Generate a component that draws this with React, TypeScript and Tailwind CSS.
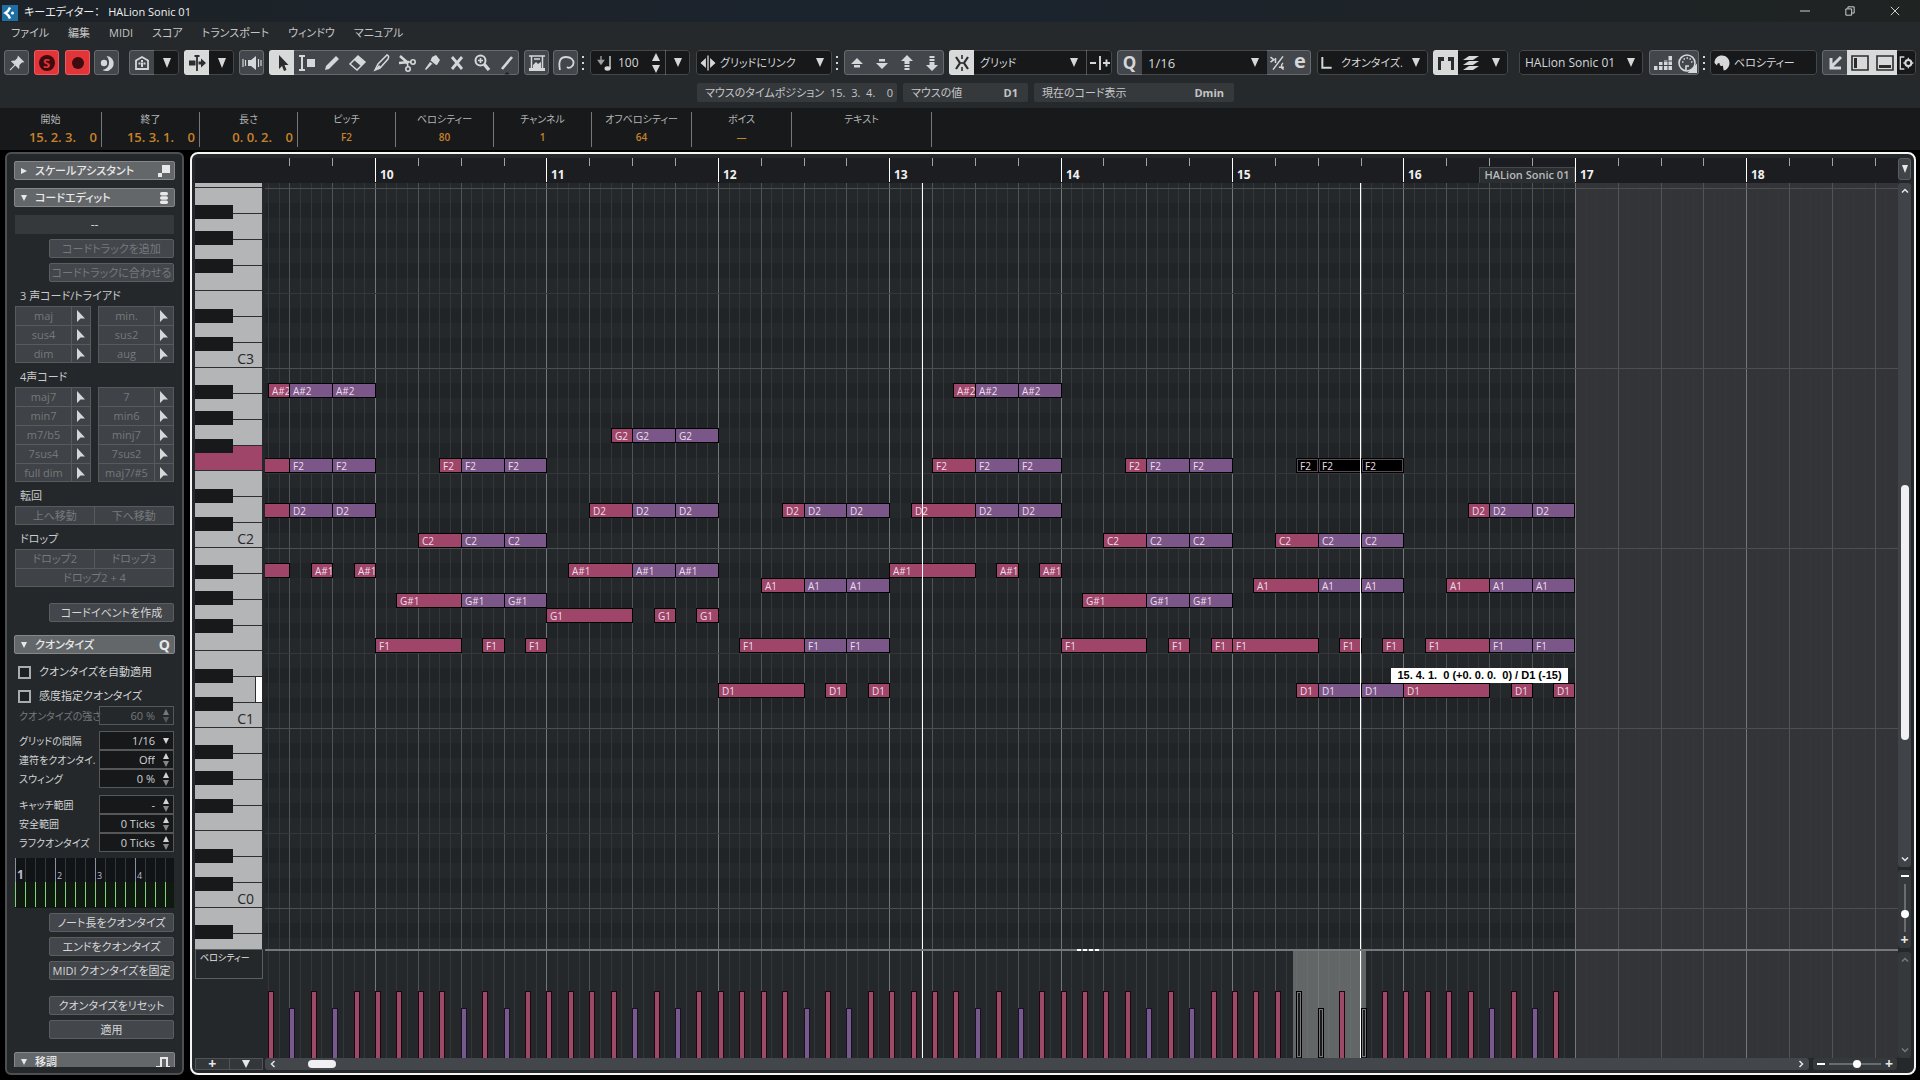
import type { ReactNode } from "react";

type Note = { pitch: string; start: number; len: number; tone: "pink" | "violet" | "held" };

const BAR_WIDTH = 171.4;
const FIRST_BAR_X = 110;
const ROW = 15;
const GRID_TOP_PITCH_Y = 5; // y of the C4 line inside the note grid

const SEMITONES: Record<string, number> = {
	"A#2": 34,
	G2: 31,
	F2: 29,
	D2: 26,
	C2: 24,
	"A#1": 22,
	A1: 21,
	"G#1": 20,
	G1: 19,
	F1: 17,
	D1: 14,
};

// start and length are counted in eighths from bar 10
const eighthX = (n: number) => Math.round(FIRST_BAR_X + (n * BAR_WIDTH) / 8);
const pitchY = (p: string) => GRID_TOP_PITCH_Y + (47 - SEMITONES[p]) * ROW;

// one bar of the arpeggio: the bass note, then three voices that come in one after another
const bar = (at: number, [bass, ...voices]: string[]) => {
	const notes: Note[] = [
		{ pitch: bass, start: at, len: 4, tone: "pink" },
		{ pitch: bass, start: at + 5, len: 1, tone: "pink" },
		{ pitch: bass, start: at + 7, len: 1, tone: "pink" },
	];
	voices.forEach((pitch, i) => {
		notes.push({ pitch, start: at + i + 1, len: 3 - i, tone: "pink" });
		notes.push({ pitch, start: at + 4, len: 2, tone: "violet" });
		notes.push({ pitch, start: at + 6, len: 2, tone: "violet" });
	});
	return notes;
};

const NOTES: Note[] = [
	...bar(-8, ["A#1", "D2", "F2", "A#2"]),
	...bar(0, ["F1", "G#1", "C2", "F2"]),
	...bar(8, ["G1", "A#1", "D2", "G2"]),
	...bar(16, ["D1", "F1", "A1", "D2"]),
	...bar(24, ["A#1", "D2", "F2", "A#2"]),
	...bar(32, ["F1", "G#1", "C2", "F2"]),
	...bar(40, ["F1", "A1", "C2", "D1"]),
	...bar(48, ["D1", "F1", "A1", "D2"]),
	{ pitch: "F2", start: 43, len: 1, tone: "held" },
	{ pitch: "F2", start: 44, len: 2, tone: "held" },
	{ pitch: "F2", start: 46, len: 2, tone: "held" },
];

const NOTE_TONES = {
	pink: "bg-[#9e4569]",
	violet: "bg-[#7b5688]",
	held: "bg-black outline outline-1 -outline-offset-2 outline-[#5a4b55]",
};

const Svg = ({ children, className = "size-6" }: { children: ReactNode; className?: string }) => (
	<svg viewBox="0 0 24 24" className={className} fill="none" stroke="currentColor" strokeWidth="2" aria-hidden="true">
		{children}
	</svg>
);

const Down = ({ className = "size-2" }: { className?: string }) => (
	<svg viewBox="0 0 8 8" className={className} fill="currentColor" preserveAspectRatio="none" aria-hidden="true">
		<path d="M0 0h8L4 8z" />
	</svg>
);

const Dots = () => (
	<div className="ml-1 flex w-1 flex-col gap-1">
		<i className="h-0.5 w-0.5 bg-gray-300" />
		<i className="h-0.5 w-0.5 bg-gray-300" />
		<i className="h-0.5 w-0.5 bg-gray-300" />
	</div>
);

type ToolProps = { label: string; children: ReactNode; tone?: "grey" | "light" | "red" | "dark"; width?: string };

const TOOL_TONES = {
	grey: "bg-[#43464a] text-[#d6d7d8]",
	light: "bg-[#d8d9d9] text-[#2a2c2e]",
	red: "bg-[#e2353a] text-[#3c0c0e]",
	dark: "bg-[#16181a] text-[#d6d7d8]",
};

const Tool = ({ label, children, tone = "grey", width = "w-[25px]" }: ToolProps) => (
	<button aria-label={label} className={`flex h-full shrink-0 items-center justify-center ${width} ${TOOL_TONES[tone]}`}>
		{children}
	</button>
);

const Group = ({ children, className = "" }: { children: ReactNode; className?: string }) => (
	<div
		className={`relative flex h-[25px] shrink-0 items-center overflow-hidden rounded-[3px] after:pointer-events-none after:absolute after:inset-0 after:rounded-[3px] after:border after:border-white/20 ${className}`}
	>
		{children}
	</div>
);

const Pick = ({ label, value, className = "" }: { label: string; value: string; className?: string }) => (
	<div className={`relative flex h-full min-w-0 flex-1 items-center bg-[#16181a] text-[#d6d7d8] ${className}`}>
		<select aria-label={label} className="w-full appearance-none bg-transparent pl-1.5 leading-5 outline-none">
			<option>{value}</option>
		</select>
		<Down className="pointer-events-none absolute right-2 h-[9px] w-2" />
	</div>
);

const TOOLS: { label: string; icon: ReactNode }[] = [
	{
		label: "Range",
		icon: <Svg><path d="M4 5h6M7 5v14M4 19h6" strokeWidth="2" /><path d="M12 8h8v8h-8z" fill="currentColor" stroke="none" /></Svg>,
	},
	{
		label: "Draw",
		icon: <Svg><path d="M5 19l1-4L16 5l3 3L9 18z" fill="currentColor" stroke="none" /></Svg>,
	},
	{
		label: "Erase",
		icon: <Svg><path d="M13 5l7 6-8 8-7-6z" strokeWidth="1.5" /><path d="M13 5l7 6-4 4-7-6z" fill="currentColor" stroke="none" /></Svg>,
	},
	{
		label: "Trim",
		icon: <Svg><path d="M5 19l3-6 9-9c2 1 2 2 1 4l-8 9z" strokeWidth="1.5" /><path d="M5 19l4-5 2 2z" fill="currentColor" stroke="none" /></Svg>,
	},
	{
		label: "Split",
		icon: <Svg><path d="M5 5l8 7M4 12l10-1" strokeWidth="2.5" /><circle cx="18" cy="11" r="2.2" strokeWidth="1.6" /><circle cx="13" cy="18" r="2.2" strokeWidth="1.6" /><path d="M12 11l1 5M12 11h4" strokeWidth="1.6" /></Svg>,
	},
	{
		label: "Glue",
		icon: <Svg><path d="M12 6l4-2 4 5-3 5-5-1-6 6-1-1 5-7z" fill="currentColor" stroke="none" /><path d="M10 10l5 4" stroke="#43464a" strokeWidth="1.5" /></Svg>,
	},
	{ label: "Mute", icon: <Svg><path d="M7 6l10 12M17 6L7 18" strokeWidth="2.8" /></Svg> },
	{
		label: "Zoom",
		icon: <Svg><circle cx="10.500" cy="9.500" r="5" /><path d="M14 13l5 6" strokeWidth="3.4" /><path d="M8 9.500h5M10.500 7v5" strokeWidth="1.6" /></Svg>,
	},
	{ label: "Line", icon: <Svg><path d="M7 18L17 6" strokeWidth="2.6" /><path d="M9 24l3-3 3 3z" fill="#1a1c1e" stroke="none" /></Svg> },
];

const Toolbar = () => (
	<div className="mt-1.5 flex h-[25px] items-center pl-1 text-[12px] text-[#d6d7d8]">
		<Group>
			<Tool label="Pin"><Svg className="size-5"><path d="M13 3l8 8-3 .5-3 3-.5 5-4.500-4.500L4 21l-1-1 6-6-4.500-4.500 5-.5 3-3z" fill="currentColor" stroke="none" /></Svg></Tool>
		</Group>
		<Group className="ml-[5px]">
			<Tool label="Solo" tone="red">
				<span className="flex size-4 items-center justify-center rounded-full bg-[#3c0c0e] text-[13px] font-bold leading-4 text-[#e2353a]">S</span>
			</Tool>
		</Group>
		<Group className="ml-1.5">
			<Tool label="Record" tone="red"><span className="size-3 rounded-full bg-[#3c0c0e]" /></Tool>
		</Group>
		<Group className="ml-1">
			<Tool label="Retrospective record"><Svg><circle cx="9" cy="12" r="3.200" fill="currentColor" stroke="none" /><path d="M11.500 5a7.500 7.500 0 1 1-4 14c7-1 8.500-9 4-14z" fill="currentColor" stroke="none" /></Svg></Tool>
		</Group>
		<Group className="ml-2.5">
			<Tool label="Part display"><Svg><path d="M6 18V9.500L12 6l6 3.500V18z" strokeWidth="1.8" /><path d="M12 9v2M12 13v3M8.500 12.500h2M13.500 12.500h2M11 12.500h2" strokeWidth="2" /></Svg></Tool>
			<Tool label="Part display options" tone="dark"><Down className="h-2.5 w-2" /></Tool>
		</Group>
		<Group className="ml-[5px]">
			<Tool label="Auto scroll" tone="light"><Svg><path d="M12 6v14M9.500 5h5" strokeWidth="1.8" /><path d="M4 9.500h6.500v5H4zM13.500 10.500H16V7.500l5 4.500-5 4.500v-3h-2.500z" fill="currentColor" stroke="none" /></Svg></Tool>
			<Tool label="Auto scroll options" tone="dark"><Down className="h-2.5 w-2" /></Tool>
		</Group>
		<Group className="ml-[5px]">
			<Tool label="Acoustic feedback"><Svg><path d="M8 9h3l5-4v14l-5-4H8z" fill="currentColor" stroke="none" /><path d="M3 8v8M5.500 9v6M18.500 8v8M21 9v6" strokeWidth="1.2" /></Svg></Tool>
		</Group>
		<Group className="ml-[5px]">
			<Tool label="Object selection" tone="light"><Svg><path d="M9 4v14l3-3 2 5 2.500-1-2-5h4z" fill="currentColor" stroke="none" /></Svg></Tool>
			{TOOLS.map((t) => (
				<Tool key={t.label} label={t.label}>{t.icon}</Tool>
			))}
		</Group>
		<Group className="ml-[5px]">
			<Tool label="Controllers"><Svg><path d="M4 5h16M6.500 5v13M17.500 5v13M9 8h6" strokeWidth="1.5" /><path d="M8 18v-4l3-3 2 2 3-2v7zM4 17h16v3H4z" fill="currentColor" stroke="none" /></Svg></Tool>
		</Group>
		<Group className="ml-1">
			<Tool label="Curves"><Svg><path d="M6 19C4 9 7 6 12 6s8 3 7.500 6.500S15 18 13 16" strokeWidth="1.8" /></Svg></Tool>
		</Group>
		<Dots />
		<Group className="ml-1 w-[100px] bg-[#16181a]">
			<Svg className="ml-1 size-6 shrink-0"><path d="M7 5v6M4.500 9.500L7 13l2.500-3.500z" strokeWidth="1.4" fill="currentColor" stroke="#9a9c9e" /><path d="M16 5v13" strokeWidth="1.4" /><ellipse cx="13.500" cy="17.500" rx="3" ry="2.200" fill="currentColor" stroke="none" /></Svg>
			<input aria-label="Insert velocity" defaultValue="100" className="w-7 bg-transparent leading-5 outline-none" />
			<button aria-label="Change velocity" className="flex w-[19px] flex-col items-center gap-1">
				<Down className="size-2 rotate-180" />
				<Down className="size-2" />
			</button>
			<Tool label="Velocity presets" tone="dark" width="w-[25px] border-l border-[#505356]"><Down className="h-[9px] w-2" /></Tool>
		</Group>
		<Group className="ml-1.5 w-[136px] bg-[#16181a] text-[11px]">
			<Svg className="ml-0.5 size-5 shrink-0"><path d="M12 3v18" strokeWidth="1.6" /><path d="M9.500 6v12l-6.500-6zM14.500 6v12l6.500-6z" fill="currentColor" stroke="none" /></Svg>
			<Pick label="Length quantize link" value="グリッドにリンク" className="[&>select]:pl-0.5" />
		</Group>
		<Dots />
		<Group className="ml-1">
			<Tool label="Nudge up"><Svg><path d="M12 7l6 6H6zM9 14h6v2.500H9z" fill="currentColor" stroke="none" /></Svg></Tool>
			<Tool label="Nudge down"><Svg><path d="M12 18l6-6H6zM9 8h6v2.500H9z" fill="currentColor" stroke="none" /></Svg></Tool>
			<Tool label="Octave up"><Svg><path d="M12 4l6 6H6zM9.500 10h5v3h-5zM9.500 14h5v2h-5zM9.500 17h5v2h-5z" fill="currentColor" stroke="none" /></Svg></Tool>
			<Tool label="Octave down"><Svg><path d="M12 20l6-6H6zM9.500 11h5v3h-5zM9.500 8h5v2h-5zM9.500 5h5v2h-5z" fill="currentColor" stroke="none" /></Svg></Tool>
		</Group>
		<Group className="ml-[5px] w-[163px] text-[11px]">
			<Tool label="Snap" tone="light"><Svg><path d="M12 4v4M12 16v4M12 11v2" strokeWidth="1.6" /><path d="M6 6l4 6-4 6M18 6l-4 6 4 6" strokeWidth="2.2" /></Svg></Tool>
			<Pick label="Snap type" value="グリッド" />
			<Tool label="Grid relative" tone="dark" width="w-[26px] border-l border-[#505356]"><Svg><path d="M2 12h6M12 5v14M15 12h7M18.500 8.500v7" strokeWidth="1.9" /></Svg></Tool>
		</Group>
		<Group className="ml-[5px] w-[194px]">
			<Tool label="Apply quantize"><span className="text-[17px] font-bold leading-5">Q</span></Tool>
			<Pick label="Quantize preset" value="1/16" className="text-[13px]" />
			<Tool label="Soft quantize" width="w-[22px]"><Svg className="size-5"><path d="M3 5l4 3-4 3M9 6v6M18 4L6 20M13 17h6M18 12c-3 2-2 8 1 7" strokeWidth="1.8" /></Svg></Tool>
			<Tool label="Quantize panel" width="w-[22px]"><span className="pb-1 text-[20px] font-bold leading-5">e</span></Tool>
		</Group>
		<Group className="ml-1.5 w-[111px] bg-[#16181a] text-[11px]">
			<Svg className="ml-0.5 size-4 shrink-0"><path d="M5 3v16h14" strokeWidth="3" /></Svg>
			<Pick label="Length quantize" value="クオンタイズ." />
		</Group>
		<Group className="ml-[5px] w-[75px] bg-[#16181a]">
			<Tool label="Show part borders" tone="light"><Svg><path d="M4 6h6v4H7v9H4zM20 6h-6v4h3v9h3z" fill="currentColor" stroke="none" /></Svg></Tool>
			<Tool label="Edit active part" tone="dark"><Svg><path d="M10 5h10l-6 4H4zM10 10h10l-6 4H4zM10 15h10l-6 4H4z" fill="currentColor" stroke="none" /></Svg></Tool>
			<Tool label="Part list" tone="dark"><Down className="h-[9px] w-2" /></Tool>
		</Group>
		<Group className="ml-[11px] w-[124px] bg-[#16181a]">
			<Pick label="Active part" value="HALion Sonic 01" />
		</Group>
		<Group className="ml-1.5">
			<Tool label="Step input"><Svg><path d="M4 19v-4h3.500v4zM9 19v-8h3.500v8zM14 19V9h3.500v10zM18.500 19V5H22v14z" fill="currentColor" stroke="none" /><path d="M3 14.500h20M3 10h20" stroke="#43464a" strokeWidth="1" /></Svg></Tool>
			<Tool label="MIDI input"><Svg><circle cx="12" cy="12" r="8" strokeWidth="1.6" /><path d="M7 11h1.500M8.500 8h1.500M11.500 7H13M14.500 8H16M16 11h1.500M11 19v-4h3" strokeWidth="1.6" /><path d="M15 21l6-6v6z" fill="currentColor" /></Svg></Tool>
		</Group>
		<Dots />
		<Group className="ml-[3px] w-[107px] bg-[#16181a] text-[11px]">
			<Svg className="ml-0.5 size-5 shrink-0"><path d="M3 12C3 6 7 3 12 3s9 4 9 9-4 9-7 9l-1-6c-3 2-4-1-4-3-2 0-3 1-3 3z" fill="currentColor" stroke="none" /></Svg>
			<select aria-label="Event colors" className="ml-0.5 appearance-none bg-transparent leading-5 outline-none">
				<option>ベロシティー</option>
			</select>
		</Group>
		<Group className="ml-[5px]">
			<Tool label="Open in lower zone"><Svg><path d="M18 6L8 16M8 7v10h10" strokeWidth="3" /></Svg></Tool>
			<Tool label="Left zone" tone="light"><Svg><path d="M4 5h16v14H4z" strokeWidth="1.6" /><path d="M6 7h3v10H6z" fill="currentColor" stroke="none" /></Svg></Tool>
			<Tool label="Lower zone" tone="light"><Svg><path d="M4 5h16v14H4z" strokeWidth="1.6" /><path d="M6 14h12v3H6z" fill="currentColor" stroke="none" /></Svg></Tool>
			<Tool label="Window layout" tone="dark" width="w-[19px]"><Svg className="size-4"><path d="M8 3H2v18h6" /><circle cx="14" cy="12" r="4.500" strokeWidth="3" /><path d="M14 4v3M14 17v3M6.500 12h3M18.500 12h3" strokeWidth="2" /></Svg></Tool>
		</Group>
	</div>
);

const INFO: { label: string; value: string; width: string; time?: boolean }[] = [
	{ label: "開始", value: "15. 2. 3.    0", width: "w-[102px]", time: true },
	{ label: "終了", value: "15. 3. 1.    0", width: "w-[98px]", time: true },
	{ label: "長さ", value: "0. 0. 2.    0", width: "w-[98px]", time: true },
	{ label: "ピッチ", value: "F2", width: "w-[98px]" },
	{ label: "ベロシティー", value: "80", width: "w-[98px]" },
	{ label: "チャンネル", value: "1", width: "w-[98px]" },
	{ label: "オフベロシティー", value: "64", width: "w-[100px]" },
	{ label: "ボイス", value: "—", width: "w-[100px]" },
	{ label: "テキスト", value: "", width: "w-[140px]" },
];

const InfoLine = () => (
	<dl className="flex h-[42px] bg-[#17191a] pt-1">
		{INFO.map((f) => (
			<div key={f.label} className={`h-[35px] border-r border-[#76787a] pt-px ${f.width}`}>
				<dt className="text-center text-[10px] leading-3 text-[#b4b5b6]">{f.label}</dt>
				<dd className={`mt-1 whitespace-pre font-semibold leading-4 text-[#c9822c] ${f.time ? "pr-1 text-right text-[13px]" : "text-center text-[10px]"}`}>
					{f.value}
				</dd>
			</div>
		))}
	</dl>
);

const Head = ({ title, open, icon }: { title: string; open?: boolean; icon: ReactNode }) => (
	<button className="flex h-[19px] w-[161px] shrink-0 items-center rounded-[2px] border border-[#85878a] bg-[#64676a] px-1 text-[#e8e8e8]">
		<Down className={`ml-0.5 size-1.5 ${open ? "" : "-rotate-90"}`} />
		<span className="ml-2 flex-1 text-left text-[11px] font-medium leading-4">{title}</span>
		{icon}
	</button>
);

const Btn = ({ children, off }: { children: ReactNode; off?: boolean }) => (
	<button
		className={`ml-auto h-[19px] w-[125px] shrink-0 whitespace-nowrap rounded-[2px] border border-[#5b5e61] bg-[#43464a] text-[11px] leading-4 ${off ? "text-[#76797c]" : "text-[#d6d7d8]"}`}
	>
		{children}
	</button>
);

const ChordGrid = ({ names }: { names: string[] }) => (
	<div className="mt-0.5 grid grid-cols-2 gap-x-[7px]">
		{names.map((n) => (
			<div key={n} className="flex h-[19px] border border-b-0 border-[#585b5e] bg-[#3f4246] [&:nth-last-child(-n+2)]:border-b">
				<button className="w-14 border-r border-[#585b5e] text-[11px] leading-4 text-[#76797c]">{n}</button>
				<button aria-label={`${n} drag`} className="flex flex-1 items-center justify-center text-[#d6d7d8]">
					<svg viewBox="0 0 10 12" className="h-3 w-2.5" fill="currentColor"><path d="M1 0v12l3.500-3.500H9z" /></svg>
				</button>
			</div>
		))}
	</div>
);

const Caption = ({ children }: { children: ReactNode }) => (
	<h3 className="mt-1.5 h-4 shrink-0 pl-[5px] text-[11px] leading-4 text-[#c9cacb]">{children}</h3>
);

const Spin = () => (
	<span className="flex flex-col gap-0.5">
		<Down className="size-1.5 rotate-180" />
		<Down className="size-1.5 opacity-60" />
	</span>
);

const Field = ({ id, label, value, off, list }: { id: string; label: string; value: string; off?: boolean; list?: boolean }) => (
	<div className={`flex h-[19px] items-center leading-4 ${off ? "text-[#76797c]" : "text-[#d2d3d4]"}`}>
		<label htmlFor={id} className="w-[84px] shrink-0 whitespace-nowrap pl-1 text-[10px]">{label}</label>
		<div className={`flex h-full flex-1 items-center border border-[#55585b] pr-1 text-[11px] ${off ? "bg-transparent" : "bg-[#16181a]"}`}>
			{list ? (
				<select id={id} className="min-w-0 flex-1 appearance-none bg-transparent pr-2 text-right outline-none">
					<option>{value}</option>
				</select>
			) : (
				<input id={id} defaultValue={value} disabled={off} className="w-0 min-w-0 flex-1 bg-transparent pr-2 text-right outline-none" />
			)}
			{list ? <Down className="size-1.5" /> : <Spin />}
		</div>
	</div>
);

const Check = ({ children }: { children: ReactNode }) => (
	<label className="flex h-6 items-center gap-2 pl-[3px] text-[11px] leading-4 text-[#d2d3d4]">
		<input type="checkbox" className="size-[13px] appearance-none border-2 border-[#a9abac] bg-[#1d2022] checked:bg-gray-300" />
		{children}
	</label>
);

const QuantizeMap = () => (
	<svg viewBox="0 0 159 50" className="mt-1.5 h-[50px] w-[159px] shrink-0 bg-[#111417]" aria-hidden="true">
		<rect y="24" width="159" height="26" fill="#10190f" />
		{Array.from({ length: 16 }, (_, i) => (
			<g key={i}>
				<path d={`M${i * 10 + 0.5} 0V24`} stroke={i % 4 ? "#33373a" : "#8d8fa0"} />
				<path d={`M${i * 10 + 0.5} 24V49`} stroke="#7fd27c" />
			</g>
		))}
		{[1, 2, 3, 4].map((n) => (
			<text key={n} x={n * 40 - 38} y="21" fontSize={n === 1 ? 12 : 9} fontWeight={n === 1 ? 700 : 400} fill="#b9bbd0">{n}</text>
		))}
	</svg>
);

const CELL = "h-[19px] border border-[#585b5e] bg-[#3f4246] text-[11px] leading-4 text-[#76797c]";

const Inspector = () => (
	<aside className="flex w-[179px] shrink-0 flex-col overflow-hidden rounded-md border-2 border-[#4d5053] bg-[#24282b] pb-1.5">
		<div className="flex min-h-0 flex-1 flex-col overflow-hidden px-[7px] pt-[7px]">
			<Head title="スケールアシスタント" icon={<svg viewBox="0 0 12 12" className="size-3" fill="currentColor"><path d="M4 0h8v8H4zM0 8h4v4H0z" /></svg>} />
			<div className="h-2 shrink-0" />
			<Head title="コードエディット" open icon={<svg viewBox="0 0 12 12" className="size-3" fill="currentColor"><rect x="2" y="0" width="8" height="3.500" rx="1.700" /><rect x="2" y="4.200" width="8" height="3.500" rx="1.700" /><rect x="2" y="8.400" width="8" height="3.500" rx="1.700" /></svg>} />
			<div className="flex w-[160px] shrink-0 flex-col pl-px">
				<output className="mt-2 h-[19px] bg-[#36393c] text-center text-[12px] leading-5 text-[#d2d3d4]">--</output>
				<div className="mt-[5px] flex flex-col gap-[5px]">
					<Btn off>コードトラックを追加</Btn>
					<Btn off>コードトラックに合わせる</Btn>
				</div>
				<Caption>3 声コード/トライアド</Caption>
				<ChordGrid names={["maj", "min.", "sus4", "sus2", "dim", "aug"]} />
				<Caption>4声コード</Caption>
				<ChordGrid names={["maj7", "7", "min7", "min6", "m7/b5", "minj7", "7sus4", "7sus2", "full dim", "maj7/#5"]} />
				<Caption>転回</Caption>
				<div className="mt-0.5 grid grid-cols-2">
					<button className={CELL}>上へ移動</button>
					<button className={`${CELL} border-l-0`}>下へ移動</button>
				</div>
				<Caption>ドロップ</Caption>
				<div className="mt-0.5 grid grid-cols-2">
					<button className={`${CELL} border-b-0`}>ドロップ2</button>
					<button className={`${CELL} border-b-0 border-l-0`}>ドロップ3</button>
					<button className={`${CELL} col-span-2`}>ドロップ2 + 4</button>
				</div>
				<div className="mt-4 mb-[13px] flex"><Btn>コードイベントを作成</Btn></div>
			</div>
			<Head title="クオンタイズ" open icon={<span className="text-[14px] font-bold leading-4">Q</span>} />
			<div className="flex w-[160px] shrink-0 flex-col pl-px pt-1.5">
				<Check>クオンタイズを自動適用</Check>
				<Check>感度指定クオンタイズ</Check>
				<div className="-mt-0.5 mb-1.5"><Field id="strength" label="クオンタイズの強さ" value="60 %" off /></div>
				<div className="flex flex-col">
					<Field id="grid" label="グリッドの間隔" value="1/16" list />
					<Field id="tuplet" label="連符をクオンタイ." value="Off" />
					<Field id="swing" label="スウィング" value="0 %" />
				</div>
				<div className="mt-[7px] flex flex-col">
					<Field id="catch" label="キャッチ範囲" value="-" />
					<Field id="safe" label="安全範囲" value="0 Ticks" />
					<Field id="rough" label="ラフクオンタイズ" value="0 Ticks" />
				</div>
				<QuantizeMap />
				<div className="mt-[5px] mb-4 flex flex-col gap-[5px]">
					<Btn>ノート長をクオンタイズ</Btn>
					<Btn>エンドをクオンタイズ</Btn>
					<Btn>MIDI クオンタイズを固定</Btn>
				</div>
				<div className="mb-[13px] flex flex-col gap-[5px]">
					<Btn>クオンタイズをリセット</Btn>
					<Btn>適用</Btn>
				</div>
			</div>
			<Head title="移調" open icon={<svg viewBox="0 0 14 12" className="h-3 w-3.5" fill="none" stroke="currentColor" strokeWidth="2"><path d="M0 11h5V2h6v9h3" /></svg>} />
		</div>
	</aside>
);

const WHITE_KEYS = ["B", "A", "G", "F", "E", "D", "C"];
const BLACK_TOPS = ["top-[17px]", "top-[43px]", "top-[71px]", "top-[121px]", "top-[149px]"];

const Octave = ({ n }: { n: number }) => (
	<div className="relative flex h-[180px] shrink-0 flex-col">
		{WHITE_KEYS.map((k) => (
			<div
				key={k}
				className={`flex justify-end border-b border-[#2b2d2f] ${k === "F" || k === "C" ? "h-[25px]" : "h-[26px]"} ${k === "F" && n === 2 ? "bg-[#9e4569]" : "bg-[#b3b5b7]"}`}
			>
				{k === "C" && n >= 0 && <span className="pr-2 pt-2 text-[14px] leading-4 text-[#26282a]">C{n}</span>}
				{k === "D" && n === 1 && <span className="w-[7px] border-l border-[#2b2d2f] bg-white" />}
			</div>
		))}
		{BLACK_TOPS.map((t) => (
			<div key={t} className={`absolute left-0 h-3.5 w-[38px] bg-[#18191b] ${t}`} />
		))}
	</div>
);

const Keyboard = () => (
	<div className="flex h-[766px] w-[67px] flex-col justify-start overflow-hidden">
		<div className="h-[5px] shrink-0 border-b border-[#2b2d2f] bg-[#b3b5b7]" />
		<Octave n={3} />
		<Octave n={2} />
		<Octave n={1} />
		<Octave n={0} />
		<Octave n={-1} />
	</div>
);

const SIXTEENTHS = Array.from({ length: 152 }, (_, i) => i - 10);
const lineTone = (s: number) => (s % 16 === 0 ? "bg-[#74777a]" : s % 4 === 0 ? "bg-[#505457]" : "bg-[#33373a]");
const sixteenthX = (s: number) => Math.round(FIRST_BAR_X + (s * BAR_WIDTH) / 16);

const GridLines = () => (
	<>
		{SIXTEENTHS.map((s) => (
			<i key={s} className={`absolute inset-y-0 w-px ${lineTone(s)}`} style={{ left: sixteenthX(s) }} />
		))}
	</>
);

// left locator and playback cursor
const Cursors = () => (
	<>
		<i className="absolute inset-y-0 left-[657px] w-px bg-white" />
		<i className="absolute inset-y-0 left-[1095px] w-px bg-white" />
	</>
);

const BLACK_ROWS = [1, 3, 5, 8, 10];

const NoteGrid = () => (
	<div className="relative h-[766px] overflow-hidden bg-[#24282b]">
		{[0, 1, 2, 3, 4].map((o) =>
			BLACK_ROWS.map((r) => (
				<i key={`${o}-${r}`} className="absolute inset-x-0 h-[15px] bg-[#212426]" style={{ top: GRID_TOP_PITCH_Y + o * 180 + r * ROW }} />
			))
		)}
		<div className="absolute inset-y-0 right-0 bg-[#333437]" style={{ left: eighthX(56) }} />
		<GridLines />
		{[0, 1, 2, 3, 4].map((o) => (
			<div key={o}>
				<i className="absolute inset-x-0 h-px bg-[#4b4f51]" style={{ top: GRID_TOP_PITCH_Y + o * 180 }} />
				<i className="absolute left-0 h-px bg-[#34383a]" style={{ top: GRID_TOP_PITCH_Y + o * 180 + 105, width: eighthX(56) }} />
			</div>
		))}
		{NOTES.map((n, i) => (
			<div
				key={i}
				className={`absolute h-[15px] overflow-hidden whitespace-nowrap border border-black pl-[3px] text-[10px] font-medium leading-[14px] text-[#ecdfe8] ${NOTE_TONES[n.tone]}`}
				style={{ left: eighthX(n.start), top: pitchY(n.pitch), width: Math.min(eighthX(n.start + n.len) + 1, eighthX(56)) - eighthX(n.start) }}
			>
				{eighthX(n.start) > 0 && n.pitch}
			</div>
		))}
		<Cursors />
		<div role="tooltip" className="absolute left-[1126px] top-[485px] h-[15px] w-[177px] whitespace-pre bg-white text-center font-['Liberation_Sans',sans-serif] text-[11px] font-bold leading-[15px] text-black">
			{"15. 4. 1.  0 (+0. 0. 0.  0) / D1 (-15)"}
		</div>
	</div>
);

const VELOCITIES = Array.from({ length: 61 }, (_, i) => i - 5);
const isSoft = (n: number) => n % 2 === 0 && (n + 8) % 8 >= 4;
const velocityTone = (n: number) => {
	if (n === 43 || n === 44 || n === 46) return "border-black bg-[#1c1c20] outline outline-1 -outline-offset-2 outline-[#77787c]";
	return isSoft(n) ? "border-[#1b1026] bg-[#775a8c]" : "border-[#22040f] bg-[#9b4a68]";
};

const VelocityLane = () => (
	<div className="relative min-h-0 flex-1 overflow-hidden bg-[#24282b]">
		<div className="absolute inset-y-0 right-0 bg-[#333437]" style={{ left: eighthX(56) }} />
		<GridLines />
		<div className="absolute inset-y-0 left-[1028px] w-[73px] bg-[#8e8f90]/60" />
		{VELOCITIES.map((n) => (
			<i
				key={n}
				className={`absolute bottom-0 w-1.5 border border-b-0 ${isSoft(n) ? "h-[50px]" : "h-[67px]"} ${velocityTone(n)}`}
				style={{ left: eighthX(n) }}
			/>
		))}
		<Cursors />
	</div>
);

const Ruler = () => (
	<div className="relative h-[25px] overflow-hidden bg-[#1b1d20]">
		<span className="absolute bottom-0 left-[1214px] h-4 w-24 border border-b-0 border-[#45484b] bg-[#2c2f32] text-center text-[11px] font-semibold leading-[14px] text-[#b9babb]">
			HALion Sonic 01
		</span>
		{SIXTEENTHS.filter((s) => s % 4 === 0).map((s) => (
			<i key={s} className={`absolute top-0 w-px ${s % 16 ? "h-2 bg-[#a0a2a3]" : "h-6 bg-white"}`} style={{ left: sixteenthX(s) }} />
		))}
		{[10, 11, 12, 13, 14, 15, 16, 17, 18].map((b) => (
			<span key={b} className="absolute top-[9px] pl-[5px] text-[12px] font-bold leading-4 text-[#f0f0f0]" style={{ left: eighthX((b - 10) * 8) }}>
				{b}
			</span>
		))}
	</div>
);

const Chevron = ({ className = "" }: { className?: string }) => (
	<svg viewBox="0 0 8 8" className={`size-2 shrink-0 ${className}`} fill="none" stroke="currentColor" strokeWidth="1.5" aria-hidden="true"><path d="M1 2.500l3 3 3-3" /></svg>
);

const RANGE =
	"appearance-none bg-transparent outline-none [&::-webkit-slider-runnable-track]:h-0.5 [&::-webkit-slider-runnable-track]:bg-[#6a6d70] [&::-webkit-slider-thumb]:-mt-[3px] [&::-webkit-slider-thumb]:size-2 [&::-webkit-slider-thumb]:appearance-none [&::-webkit-slider-thumb]:rounded-full [&::-webkit-slider-thumb]:bg-white";

const Editor = () => (
	<main className="flex min-w-0 flex-1 flex-col rounded-lg border-2 border-[#f4f4f4] bg-[#24282b] px-[3px] pb-[3px] pt-1 text-[#e6e6e6]">
		<div className="flex min-h-0 flex-1">
			<div className="flex w-[70px] shrink-0 flex-col">
				<div className="h-[25px] bg-[#1b1d20]" />
				<Keyboard />
				<div className="h-[30px] w-[68px] border border-[#5b5e60] pl-1 text-[9px] leading-4">ベロシティー</div>
			</div>
			<div className="flex min-w-0 flex-1 flex-col">
				<Ruler />
				<NoteGrid />
				<div className="flex h-0.5 shrink-0 justify-center gap-0.5 bg-[#75787a] pl-3">
					<i className="w-1 bg-white" />
					<i className="w-1 bg-white" />
					<i className="w-1 bg-white" />
					<i className="w-1 bg-white" />
				</div>
				<VelocityLane />
			</div>
			<div className="flex w-[13px] shrink-0 flex-col">
				<button aria-label="Ruler options" className="flex h-[22px] items-center justify-center rounded-[3px] border border-[#5b5e60] bg-[#404347]"><Down className="h-2 w-1.5" /></button>
				<div role="scrollbar" aria-controls="roll" aria-valuenow={50} aria-orientation="vertical" className="mt-[3px] flex h-[684px] flex-col items-center rounded-[3px] bg-[#404347] py-1">
					<Chevron className="rotate-180" />
					<span className="mt-[290px] h-[255px] w-2 shrink-0 rounded bg-[#f0f0f2]" />
					<Chevron className="mt-auto" />
				</div>
				<div className="mt-[3px] flex h-[78px] flex-col items-center justify-between rounded-[3px] bg-[#36393c] text-[14px] font-bold leading-3">
					<button aria-label="Zoom out vertically" className="flex h-3 items-center"><i className="h-0.5 w-2 bg-white" /></button>
					<input
						type="range"
						aria-label="Vertical zoom"
						defaultValue={34}
						className="h-12 w-2 appearance-none bg-transparent outline-none [writing-mode:vertical-lr] [direction:rtl] [&::-webkit-slider-runnable-track]:w-0.5 [&::-webkit-slider-runnable-track]:bg-[#6a6d70] [&::-webkit-slider-thumb]:-ml-[3px] [&::-webkit-slider-thumb]:size-2 [&::-webkit-slider-thumb]:appearance-none [&::-webkit-slider-thumb]:rounded-full [&::-webkit-slider-thumb]:bg-white"
					/>
					<button aria-label="Zoom in vertically" className="pb-0.5">+</button>
				</div>
				<div className="mt-1 flex flex-1 flex-col items-center justify-between rounded-[3px] bg-[#36393c] py-1 text-[#77797b]">
					<Chevron className="rotate-180" />
					<Chevron />
				</div>
			</div>
		</div>
		<div className="flex h-3 shrink-0 items-center">
			<div className="mr-0.5 flex h-3 w-[68px] shrink-0 border border-[#505355] bg-[#34373a]">
				<button aria-label="Add lane" className="flex flex-1 items-center justify-center border-r border-[#505355] text-[14px] font-bold leading-3">+</button>
				<button aria-label="Lane presets" className="flex flex-1 items-center justify-center"><Down className="size-2" /></button>
			</div>
			<div role="scrollbar" aria-controls="roll" aria-valuenow={3} className="flex h-3 flex-1 items-center rounded-[3px] bg-[#43464a] px-1">
				<Chevron className="rotate-90" />
				<span className="ml-[31px] h-2 w-7 rounded bg-[#f0f0f2]" />
				<span className="flex-1" />
				<Chevron className="-rotate-90" />
			</div>
			<div className="ml-1 mr-3.5 flex h-3 w-[84px] items-center justify-between rounded-[3px] bg-[#36393c] px-1">
				<button aria-label="Zoom out" className="flex h-3 items-center"><i className="h-0.5 w-2 bg-white" /></button>
				<input type="range" aria-label="Horizontal zoom" defaultValue={55} className={`w-[52px] ${RANGE}`} />
				<button aria-label="Zoom in" className="text-[14px] font-bold leading-3">+</button>
			</div>
		</div>
	</main>
);

const MENUS = ["ファイル", "編集", "MIDI", "スコア", "トランスポート", "ウィンドウ", "マニュアル"];

export default function App() {
	return (
		<div className="flex h-screen flex-col overflow-hidden bg-black font-['Open_Sans','Noto_Sans_CJK_JP',sans-serif] [font-feature-settings:'palt']">
			<header className="flex h-[108px] shrink-0 flex-col bg-[#25292c]">
				<div className="flex h-[22px] items-center bg-linear-to-r from-[#1c2227] via-[#1b232d] to-[#1f2322] pl-0.5 text-[#f0f0f0]">
					<svg viewBox="0 0 16 16" className="mt-1 size-4 bg-[#1f6fa3]" fill="none" stroke="#fff" strokeWidth="2"><path d="M8 2.500C7 5 6 6.500 3.500 8 6 9.500 7 11 8 13.500" strokeWidth="2.400" /><circle cx="10.500" cy="8" r="1.500" fill="#fff" stroke="none" /></svg>
					<h1 className="ml-1.5 mt-0.5 whitespace-pre text-[11px] leading-4">{"キーエディター：   HALion Sonic 01"}</h1>
					<div className="ml-auto flex items-center gap-[35px] pr-5">
						<button aria-label="Minimize"><Svg className="size-2.5"><path d="M0 12h24" /></Svg></button>
						<button aria-label="Restore"><Svg className="size-2.5"><path d="M2 7h14v15H2zM7 6V2h15v15h-5" /></Svg></button>
						<button aria-label="Close"><Svg className="size-2.5"><path d="M2 2l20 20M22 2L2 22" /></Svg></button>
					</div>
				</div>
				<nav className="flex h-[22px] items-center gap-[19px] pl-[11px] text-[11px] leading-4 text-[#c4c5c6]">
					{MENUS.map((m) => (
						<button key={m}>{m}</button>
					))}
				</nav>
				<Toolbar />
				<div className="mt-2 flex h-[19px] gap-1.5 pl-[697px] text-[11px] leading-[19px] text-[#c4c5c6]">
					<div className="flex w-[200px] justify-between rounded-[2px] bg-[#36393c] pl-2 pr-1">
						<span>マウスのタイムポジション</span>
						<span className="whitespace-pre">{"15.  3.  4.    0"}</span>
					</div>
					<div className="flex w-[125px] justify-between rounded-[2px] bg-[#36393c] pl-2 pr-2.5">
						<span>マウスの値</span>
						<b className="font-bold">D1</b>
					</div>
					<div className="flex w-[200px] justify-between rounded-[2px] bg-[#36393c] pl-2 pr-2.5">
						<span>現在のコード表示</span>
						<b className="font-bold">Dmin</b>
					</div>
				</div>
			</header>
			<InfoLine />
			<div id="roll" className="flex min-h-0 flex-1 gap-[6px] pb-[5px] pl-[5px] pr-1 pt-0.5">
				<Inspector />
				<Editor />
			</div>
		</div>
	);
}
